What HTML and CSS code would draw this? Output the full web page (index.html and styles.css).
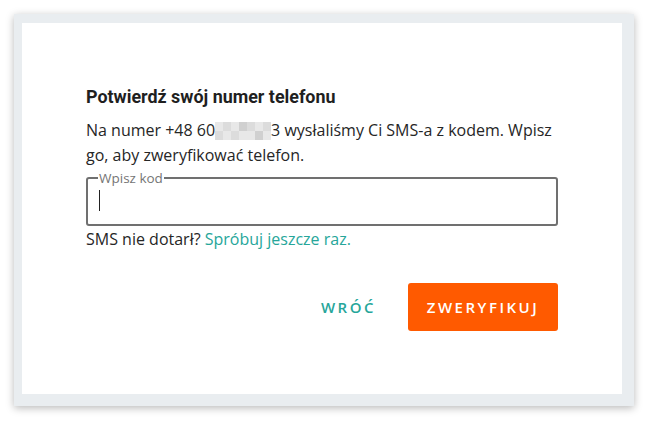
FILE: index.html
```html
<!DOCTYPE html>
<html lang="pl">
<head>
<meta charset="utf-8">
<title>Potwierdź numer</title>
<link rel="stylesheet" href="styles.css">
</head>
<body>
<div class="frame">
  <div class="dialog">
    <h2 class="title">Potwierdź swój numer telefonu</h2>
    <p class="desc">Na numer +48 60<span class="mosaic"></span>3 wysłaliśmy Ci SMS-a z kodem. Wpisz go, aby zweryfikować telefon.</p>
    <fieldset class="field">
      <legend class="legend">Wpisz kod</legend>
      <span class="caret"></span>
    </fieldset>
    <p class="resend">SMS nie dotarł? <a class="link" href="#">Spróbuj jeszcze raz.</a></p>
    <div class="actions">
      <button class="btn btn-text">WRÓĆ</button>
      <button class="btn btn-primary">ZWERYFIKUJ</button>
    </div>
  </div>
</div>
</body>
</html>
```

FILE: styles.css
```css
* { box-sizing: border-box; }
html, body { margin: 0; padding: 0; background: #ffffff; }
body {
  width: 648px;
  height: 421px;
  padding: 14px 14px 15px 14px;
  font-family: "Open Sans", sans-serif;
  color: #212121;
}
.frame {
  width: 620px;
  height: 392px;
  background: #e9edf0;
  padding: 9px 12px 12px 8px;
  box-shadow: 0 2px 8px rgba(0,0,0,0.28);
}
.dialog {
  background: #ffffff;
  height: 100%;
  padding: 63px 64px 0 64px;
  display: flex;
  flex-direction: column;
}
.dialog > * { flex-shrink: 0; }
.title {
  margin: 0;
  font-family: Roboto, sans-serif;
  font-weight: 700;
  font-size: 17.9px;
  line-height: 22px;
  color: #1f1f1f;
}
.desc {
  margin: 10px 0 0 0;
  font-size: 16px;
  line-height: 25px;
  color: #262626;
}
.mosaic {
  display: inline-block;
  width: 56px;
  height: 18px;
  vertical-align: -4px;
  background:
    linear-gradient(90deg, #e8e8e8 0 8px, #dcdcdc 8px 16px, #e8e8e8 16px 24px, #d0d0d0 24px 32px, #dcdcdc 32px 40px, #e8e8e8 40px 48px, #dcdcdc 48px 56px) top / 56px 9px no-repeat,
    linear-gradient(90deg, #dcdcdc 0 8px, #e8e8e8 8px 16px, #dcdcdc 16px 24px, #e8e8e8 24px 32px, #e8e8e8 32px 40px, #d0d0d0 40px 48px, #e8e8e8 48px 56px) bottom / 56px 9px no-repeat;
}
.field {
  margin: 3px 0 0 0;
  height: 55px;
  border: 2px solid #707070;
  border-radius: 3px;
  padding: 0 11px;
  min-width: 0;
}
.legend {
  padding: 0 1px;
  margin-left: -1px;
  font-size: 13.5px;
  line-height: 14px;
  color: #757575;
}
.caret {
  display: block;
  width: 1px;
  height: 21px;
  background: #222;
  margin-top: 5px;
}
.resend {
  margin: 1px 0 0 0;
  font-size: 16px;
  line-height: 24px;
  color: #262626;
}
.link { color: #26a69a; text-decoration: none; }
.actions {
  display: flex;
  justify-content: flex-end;
  align-items: center;
  gap: 14px;
  margin-top: 32px;
}
.btn {
  font-family: "Open Sans", sans-serif;
  font-weight: 600;
  font-size: 15px;
  letter-spacing: 2.5px;
  border: none;
  border-radius: 3px;
  height: 48px;
  cursor: pointer;
}
.btn-text {
  background: transparent;
  color: #26a69a;
  padding: 0 18px;
}
.btn-primary {
  background: #ff5a00;
  color: #ffffff;
  width: 150px;
  padding: 0;
}
```
